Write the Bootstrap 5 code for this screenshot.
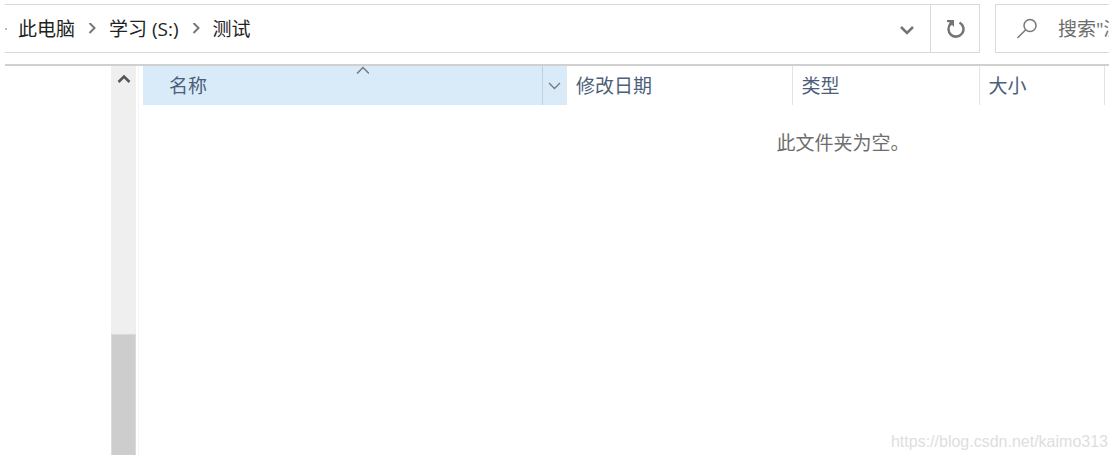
<!DOCTYPE html>
<html lang="zh-CN">
<head>
<meta charset="utf-8">
<meta name="viewport" content="width=device-width, initial-scale=1">
<title>测试</title>
<link href="https://cdn.jsdelivr.net/npm/bootstrap@5.3.0/dist/css/bootstrap.min.css" rel="stylesheet">
<style>
  body { font-family: "Open Sans", "Noto Sans CJK SC", sans-serif; font-size: 19px; line-height: 28px; color: #222; background: #fff; }
  .explorer { height: 100vh; padding: 4px 7px 5px 5px; }
  .toolbar { height: 49px; gap: 15px; margin-bottom: 11px; }
  .address { border: 1px solid #d9d9d9; border-left: 0; }
  .crumb-edge { width: 2px; height: 2px; background: #bbb; }
  .crumbs { padding-left: 11px; gap: 13px; }
  .crumbs li { gap: 13px; }
  .crumbs a { color: #222; }
  .tool-btn { width: 48px; border: 0; border-radius: 0; padding: 0; }
  .tool-btn.reload { width: 49px; border-left: 1px solid #d9d9d9; }
  .search { width: 114px; border: 1px solid #d9d9d9; border-right: 0; padding-left: 20px; gap: 20px; }
  .search input { border: 0; padding: 0; min-width: 0; color: #666; outline: 0; }
  .search input::placeholder { color: #6d6d6d; opacity: 1; }
  .main-area { border-top: 2px solid #d0d0d0; }
  .side { width: 106px; }
  .scroller { width: 25px; background: #efefef; }
  .scroller button { height: 26px; border: 0; background: none; padding: 0; }
  .thumb { height: 31%; background: #cdcdcd; border: 1px solid #dadada; border-bottom: 0; }
  .files { margin-left: 2px; padding-left: 4px; border-left: 1px solid #f4f4f4; }
  .files table { table-layout: fixed; width: 100%; }
  .files th { height: 39px; padding: 0 9px; font-weight: 400; color: #4c607a; border-right: 1px solid #e3e3e3; }
  .files th.sorted { background: #d9ebf9; padding: 0 0 0 26px; border: 0; }
  .sort-mark { left: 50%; top: 0; }
  .name-menu { width: 25px; height: 39px; border: 0; border-left: 1px solid #b9d3e6; background: none; padding: 0 2px 0 0; }
  .w-date { width: 225px; } .w-type { width: 187px; } .w-size { width: 125px; } .w-rest { width: 5px; }
  .files th:last-child { border: 0; padding: 0; }
  .empty-note { padding: 24px 0 0 434px; color: #6d6d6d; }
  .site-mark { right: 1px; bottom: 0; font: 16px/26px "Liberation Sans", sans-serif; color: #dedede; }
  svg { display: block; fill: none; flex: none; }
</style>
</head>
<body>
<div class="explorer d-flex flex-column overflow-hidden">
  <header class="toolbar d-flex">
    <div class="address d-flex flex-grow-1">
      <nav class="d-flex align-items-center flex-grow-1" aria-label="地址">
        <span class="crumb-edge"></span>
        <ol class="crumbs list-unstyled d-flex m-0">
          <li class="d-flex align-items-center"><a class="text-decoration-none" href="#">此电脑</a>
            <svg width="8" height="12" viewBox="0 0 8 12" stroke="#777" stroke-width="2"><path d="M1.5 0L6.5 5L1.5 10"/></svg></li>
          <li class="d-flex align-items-center"><a class="text-decoration-none" href="#">学习 (S:)</a>
            <svg width="8" height="12" viewBox="0 0 8 12" stroke="#777" stroke-width="2"><path d="M1.5 0L6.5 5L1.5 10"/></svg></li>
          <li><a class="text-decoration-none" href="#" aria-current="page">测试</a></li>
        </ol>
      </nav>
      <button class="tool-btn btn d-flex align-items-center justify-content-center" type="button" aria-label="历史记录">
        <svg width="16" height="12" viewBox="0 0 16 12" stroke="#747474" stroke-width="2.5"><path d="M3 4L9 10L15 4"/></svg>
      </button>
      <button class="tool-btn reload btn d-flex align-items-center justify-content-center" type="button" aria-label="刷新">
        <svg width="20" height="20" viewBox="0 0 20 20" stroke="#747474" stroke-width="2.500"><path d="M14.500 3.500A7.500 7.500 0 1 1 6 4.500"/><path d="M2 1H9V8L6.800 5.800L5 7L3.500 5.200L5 3.500L2 3Z" fill="#747474" stroke="none"/></svg>
      </button>
    </div>
    <div class="search d-flex align-items-center overflow-hidden">
      <svg width="22" height="22" viewBox="0 0 22 22" stroke="#777" stroke-width="1.500"><circle cx="14" cy="7.500" r="6"/><path d="M9.700 11.800L1.500 20"/></svg>
      <input class="flex-grow-1 bg-transparent" type="text" placeholder="搜索&quot;测试&quot;" aria-label="搜索">
    </div>
  </header>

  <main class="main-area d-flex flex-grow-1 position-relative">
    <div class="side flex-shrink-0"></div>
    <div class="scroller d-flex flex-column justify-content-between flex-shrink-0">
      <button type="button" class="d-flex align-items-center justify-content-center" aria-label="向上滚动">
        <svg width="14" height="10" viewBox="0 0 14 10" stroke="#555" stroke-width="2.500"><path d="M1.500 8L7 2.500L12.500 8"/></svg>
      </button>
      <div class="thumb"></div>
    </div>
    <section class="files flex-grow-1">
      <table>
        <colgroup><col><col class="w-date"><col class="w-type"><col class="w-size"><col class="w-rest"></colgroup>
        <thead>
          <tr>
            <th class="sorted position-relative" scope="col" aria-sort="ascending">
              <svg class="sort-mark position-absolute" width="14" height="9" viewBox="0 0 14 9" stroke="#777" stroke-width="1.500"><path d="M2 7.500L8 1.500L14 7.500"/></svg>
              <div class="d-flex align-items-center justify-content-between">
                <span>名称</span>
                <button class="name-menu d-flex align-items-center justify-content-center" type="button" aria-label="筛选名称">
                  <svg width="13" height="8" viewBox="0 0 13 8" stroke="#777" stroke-width="1.300"><path d="M1 1L6.500 6.500L12 1"/></svg>
                </button>
              </div>
            </th>
            <th scope="col">修改日期</th>
            <th scope="col">类型</th>
            <th scope="col">大小</th>
            <th></th>
          </tr>
        </thead>
      </table>
      <p class="empty-note m-0 text-center">此文件夹为空。</p>
    </section>
    <div class="site-mark position-absolute">https://blog.csdn.net/kaimo313</div>
  </main>
</div>
<script src="https://cdn.jsdelivr.net/npm/bootstrap@5.3.0/dist/js/bootstrap.bundle.min.js"></script>
</body>
</html>
